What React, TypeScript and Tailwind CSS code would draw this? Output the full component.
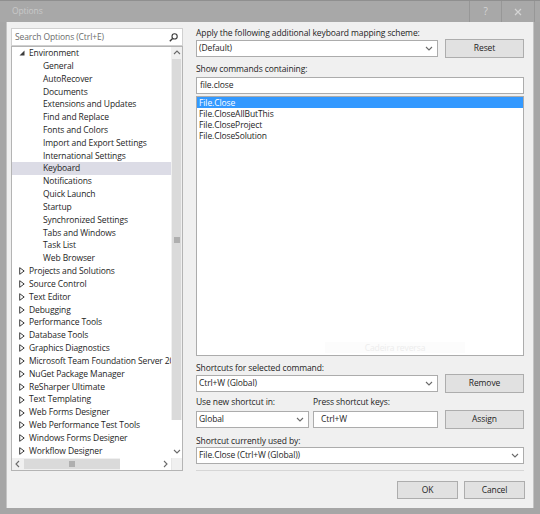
import React from "react";

type Node = { label: string; level: 0 | 1; expanded?: boolean; selected?: boolean };

const envChildren = [
  "General",
  "AutoRecover",
  "Documents",
  "Extensions and Updates",
  "Find and Replace",
  "Fonts and Colors",
  "Import and Export Settings",
  "International Settings",
  "Keyboard",
  "Notifications",
  "Quick Launch",
  "Startup",
  "Synchronized Settings",
  "Tabs and Windows",
  "Task List",
  "Web Browser",
];

const topLevel = [
  "Projects and Solutions",
  "Source Control",
  "Text Editor",
  "Debugging",
  "Performance Tools",
  "Database Tools",
  "Graphics Diagnostics",
  "Microsoft Team Foundation Server 2013",
  "NuGet Package Manager",
  "ReSharper Ultimate",
  "Text Templating",
  "Web Forms Designer",
  "Web Performance Test Tools",
  "Windows Forms Designer",
  "Workflow Designer",
];

const nodes: Node[] = [
  { label: "Environment", level: 0, expanded: true },
  ...envChildren.map((l) => ({ label: l, level: 1 as const, selected: l === "Keyboard" })),
  ...topLevel.map((l) => ({ label: l, level: 0 as const })),
];

const commands = ["File.Close", "File.CloseAllButThis", "File.CloseProject", "File.CloseSolution"];

function Chevron({ dir, className = "" }: { dir: "up" | "down" | "left" | "right"; className?: string }) {
  const d = {
    up: "M1 5 L4 2 L7 5",
    down: "M1 2 L4 5 L7 2",
    left: "M5 1 L2 4 L5 7",
    right: "M3 1 L6 4 L3 7",
  }[dir];
  return (
    <svg width="8" height="8" viewBox="0 0 8 8" className={className}>
      <path d={d} fill="none" stroke="#6a6a6a" strokeWidth="1.1" />
    </svg>
  );
}

function Expander({ open }: { open: boolean }) {
  return open ? (
    <svg width="6" height="6" viewBox="0 0 6 6">
      <path d="M5.5 0.5 L5.5 5.5 L0.5 5.5 Z" fill="#3c3c3c" />
    </svg>
  ) : (
    <svg width="6" height="8" viewBox="0 0 6 8">
      <path d="M0.7 0.7 L5.2 4 L0.7 7.3 Z" fill="none" stroke="#3c3c3c" strokeWidth="1" />
    </svg>
  );
}

function Combo({ value, className = "" }: { value: string; className?: string }) {
  return (
    <div
      className={`h-[17px] bg-white border border-[#acacac] flex items-center pl-[2px] pr-[4px] ${className}`}
    >
      <span className="flex-1 whitespace-nowrap">{value}</span>
      <Chevron dir="down" />
    </div>
  );
}

function Button({ label, className = "" }: { label: string; className?: string }) {
  return (
    <div
      className={`bg-[#e1e1e1] border border-[#adadad] flex items-center justify-center ${className}`}
    >
      {label}
    </div>
  );
}

function Label({ text, className = "" }: { text: string; className?: string }) {
  return <div className={`h-[12px] leading-[12px] whitespace-nowrap ${className}`}>{text}</div>;
}

function TitleBar() {
  return (
    <div className="h-[22px] flex items-stretch bg-[#a8a8a8] border-t border-[#8f8f8f]">
      <div className="pl-[12px] flex items-center text-[#c9c9c9]">Options</div>
      <div className="ml-auto flex pr-[5px]">
        <div className="w-[32px] border-l border-[#979797] flex items-center justify-center text-[#d4d4d4] text-[10px]">
          ?
        </div>
        <div className="w-[34px] border-l border-r border-[#979797] flex items-center justify-center">
          <svg width="8" height="8" viewBox="0 0 8 8">
            <path d="M1 1 L7 7 M7 1 L1 7" stroke="#d4d4d4" strokeWidth="1.2" />
          </svg>
        </div>
      </div>
    </div>
  );
}

function SearchBox() {
  return (
    <div className="h-[18px] bg-white border border-[#d0d0d0] flex items-center pl-[3px] pr-[4px]">
      <span className="flex-1 text-[#6d6d6d]">Search Options (Ctrl+E)</span>
      <svg width="9" height="9" viewBox="0 0 9 9">
        <circle cx="5.6" cy="3.4" r="2.6" fill="none" stroke="#3a3a3a" strokeWidth="1.1" />
        <path d="M3.6 5.4 L0.8 8.2" stroke="#3a3a3a" strokeWidth="1.4" />
      </svg>
    </div>
  );
}

function Tree() {
  return (
    <div className="h-[425px] bg-white border border-[#b4b4b4] flex flex-col">
      <div className="flex flex-1 min-h-0">
        <div className="flex-1 min-w-0 overflow-hidden">
          {nodes.map((n) => (
            <div
              key={n.label}
              className={`h-[12.84px] flex items-center whitespace-nowrap ${
                n.selected ? "bg-[#dcdce6]" : ""
              }`}
            >
              {n.level === 0 ? (
                <>
                  <span className="w-[17px] shrink-0 flex justify-end pr-[4px]">
                    <Expander open={!!n.expanded} />
                  </span>
                  <span>{n.label}</span>
                </>
              ) : (
                <span className="pl-[31px]">{n.label}</span>
              )}
            </div>
          ))}
        </div>
        {/* vertical scrollbar */}
        <div className="w-[11px] bg-[#f0f0f0] flex flex-col">
          <div className="h-[12px] flex items-center justify-center">
            <Chevron dir="up" />
          </div>
          <div className="h-[361px] mx-[1px] bg-[#dadada] flex items-center justify-center">
            <svg width="6" height="6" viewBox="0 0 6 6">
              <path d="M0 1 H6 M0 3 H6 M0 5 H6" stroke="#7a7a7a" strokeWidth="0.9" />
            </svg>
          </div>
          <div className="flex-1 bg-white" />
          <div className="h-[12px] bg-white flex items-center justify-center">
            <Chevron dir="down" />
          </div>
        </div>
      </div>
      {/* horizontal scrollbar */}
      <div className="h-[12px] flex">
        <div className="flex-1 flex items-center bg-[#f0f0f0]">
          <div className="w-[12px] flex justify-center">
            <Chevron dir="left" />
          </div>
          <div className="w-[96px] h-[10px] bg-[#dadada] flex items-center justify-center">
            <svg width="6" height="6" viewBox="0 0 6 6">
              <path d="M1 0 V6 M3 0 V6 M5 0 V6" stroke="#7a7a7a" strokeWidth="0.9" />
            </svg>
          </div>
          <div className="flex-1 h-full bg-white" />
          <div className="w-[12px] h-full bg-white flex items-center justify-center">
            <Chevron dir="right" />
          </div>
        </div>
        <div className="w-[11px] bg-[#f0f0f0] border-l border-[#e6e6e6]" />
      </div>
    </div>
  );
}

export default function App() {
  return (
    <div className="w-[540px] h-[514px] bg-[#a6a6a6] flex flex-col font-['Open_Sans',sans-serif] text-[8.5px] tracking-[-0.1px] text-[#1e1e1e]">
      <TitleBar />
      <div className="flex-1 mx-[6px] mb-[6px] bg-[#f0f0f0] border-l border-r border-[#c4c4c4] flex gap-[13px] pl-[4px] pr-[9px] pt-[5px]">
        {/* category tree */}
        <div className="w-[172px] shrink-0 pt-[1px] flex flex-col">
          <SearchBox />
          <Tree />
        </div>

        {/* keyboard page */}
        <div className="flex-1 flex flex-col">
          <Label text="Apply the following additional keyboard mapping scheme:" />
          <div className="h-[19px] flex items-center gap-[7px]">
            <Combo value="(Default)" className="flex-1" />
            <Button label="Reset" className="w-[79px] h-[19px]" />
          </div>

          <Label text="Show commands containing:" className="mt-[5px]" />
          <div className="mt-[2px] h-[17px] bg-white border border-[#acacac] flex items-center pl-[3px]">
            file.close
          </div>

          <div className="relative mt-[2px] h-[260px] bg-white border border-[#acacac] pt-[0px]">
            {commands.map((c, i) => (
              <div
                key={c}
                className={`h-[11px] leading-[11px] pl-[2px] ${
                  i === 0 ? "bg-[#3399ff] text-white" : ""
                }`}
              >
                {c}
              </div>
            ))}
            <div className="absolute left-[128px] bottom-[2px] w-[140px] h-[11px] bg-[#fcfcfc] text-center leading-[11px] text-[#ececec]">
              Cadeira reversa
            </div>
          </div>

          <Label text="Shortcuts for selected command:" className="mt-[6px]" />
          <div className="h-[19px] flex items-center gap-[7px]">
            <Combo value="Ctrl+W (Global)" className="flex-1" />
            <Button label="Remove" className="w-[79px] h-[19px]" />
          </div>

          <div className="mt-[3px] flex gap-[4px]">
            <Label text="Use new shortcut in:" className="w-[113px]" />
            <Label text="Press shortcut keys:" />
          </div>
          <div className="mt-[2px] h-[19px] flex items-center gap-[4px]">
            <Combo value="Global" className="w-[113px]" />
            <div className="flex-1 h-[17px] bg-white border border-[#acacac] flex items-center pl-[7px]">
              Ctrl+W
            </div>
            <Button label="Assign" className="ml-[3px] w-[79px] h-[19px]" />
          </div>

          <Label text="Shortcut currently used by:" className="mt-[6px]" />
          <Combo value="File.Close (Ctrl+W (Global))" />

          <div className="mt-[6px] border-t border-[#d6d6d6]" />

          <div className="mt-[10px] flex justify-end gap-[6px] -mr-[1px]">
            <Button label="OK" className="w-[61px] h-[18px]" />
            <Button label="Cancel" className="w-[61px] h-[18px]" />
          </div>
        </div>
      </div>
    </div>
  );
}
